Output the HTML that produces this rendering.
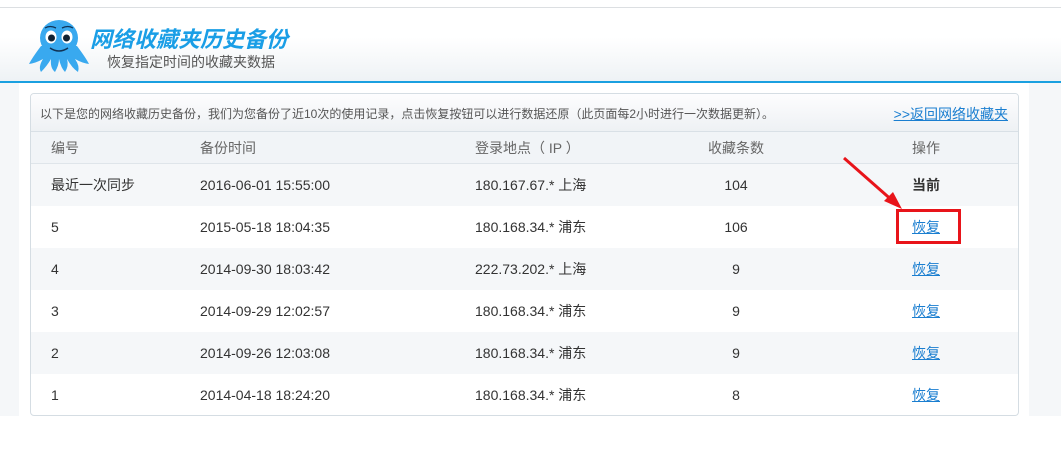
<!DOCTYPE html>
<html><head><meta charset="utf-8"><style>
*{margin:0;padding:0;box-sizing:border-box}
body{width:1061px;height:453px;background:#fff;font-family:"Liberation Sans","Noto Sans CJK SC",sans-serif;position:relative;overflow:hidden}
.topline{position:absolute;left:0;top:7px;width:1061px;height:1px;background:#dcdfe2}
.header{position:absolute;left:0;top:8px;width:1061px;height:73px;background:linear-gradient(#fff,#fff 40%,#eef2f5)}
.blue{position:absolute;left:0;top:81px;width:1061px;height:2px;background:#1aa0e0}
.side{position:absolute;top:83px;height:333px;background:#f5f7f9}
.panel{position:absolute;left:19px;top:83px;width:1010px;height:333px;background:#fff}
.card{position:absolute;left:30px;top:93px;width:989px;height:323px;border:1px solid #d5dde3;border-radius:4px;overflow:hidden;background:#fff}
.intro{height:38px;background:linear-gradient(#fdfdfe,#eef1f4);border-bottom:1px solid #d9e0e6;font-size:12px;color:#555;line-height:40px;padding-left:9px;position:relative}
.intro a{position:absolute;right:10px;top:0;color:#1a7ed0;font-size:14px;text-decoration:underline}
.row{height:42px;position:relative;font-size:14px;color:#333}
.row span{position:absolute;top:0;line-height:42px}
.hd{height:32px;background:#f1f4f7;border-bottom:1px solid #dfe5ea;color:#666}
.hd span{line-height:32px}
.g{background:#f5f7f9}
.c1{left:20px}.c2{left:169px}.c3{left:444px}.c4{left:680px;width:50px;text-align:center}.c5{left:875px;width:40px;text-align:center}
.lk{color:#1a7ed0;text-decoration:underline}
.title{position:absolute;left:90px;top:22px;font-size:22px;font-weight:bold;font-style:italic;color:#1a9ee6}
.sub{position:absolute;left:107px;top:52px;font-size:14px;color:#555}
</style></head><body>
<div class="topline"></div>
<div class="header"></div>
<svg style="position:absolute;left:28px;top:18px" width="62" height="56" viewBox="0 0 62 56">
<g fill="#39a9ef">
<ellipse cx="31" cy="20" rx="19" ry="18"/>
<path d="M13 28 Q4 40 1 46 Q8 45 15 41 Q10 49 13 54 Q19 48 23 41 Q22 50 27 54 Q31 47 31 41 Q33 50 37 54 Q41 48 39 41 Q44 50 50 54 Q52 48 47 41 Q54 45 61 46 Q58 40 49 28 Z"/>
</g>
<ellipse cx="23" cy="19" rx="5.5" ry="6.5" fill="#fff"/><ellipse cx="39" cy="19" rx="5.5" ry="6.5" fill="#fff"/>
<circle cx="23.5" cy="20" r="3.5" fill="#123"/><circle cx="38.5" cy="20" r="3.5" fill="#123"/>
<path d="M22 30 Q31 36 40 30" stroke="#135" stroke-width="1.5" fill="none"/>
<path d="M17 10 Q22 7 28 10 M34 10 Q40 7 45 10" stroke="#135" stroke-width="1.3" fill="none"/>
</svg>
<div class="title">网络收藏夹历史备份</div>
<div class="sub">恢复指定时间的收藏夹数据</div>
<div class="blue"></div>
<div class="side" style="left:0;width:19px"></div>
<div class="side" style="left:1029px;width:32px"></div>
<div class="panel"></div>
<div class="card">
<div class="intro">以下是您的网络收藏历史备份，我们为您备份了近10次的使用记录，点击恢复按钮可以进行数据还原（此页面每2小时进行一次数据更新）。<a>&gt;&gt;返回网络收藏夹</a></div>
<div class="row hd"><span class="c1">编号</span><span class="c2">备份时间</span><span class="c3">登录地点（ IP ）</span><span class="c4" style="left:670px;width:70px">收藏条数</span><span class="c5">操作</span></div>
<div class="row g"><span class="c1">最近一次同步</span><span class="c2">2016-06-01 15:55:00</span><span class="c3">180.167.67.* 上海</span><span class="c4">104</span><span class="c5" style="font-weight:bold">当前</span></div>
<div class="row"><span class="c1">5</span><span class="c2">2015-05-18 18:04:35</span><span class="c3">180.168.34.* 浦东</span><span class="c4">106</span><span class="c5 lk">恢复</span>
<div style="position:absolute;left:865px;top:3px;width:65px;height:35px;border:3px solid #e8141a"></div></div>
<div class="row g"><span class="c1">4</span><span class="c2">2014-09-30 18:03:42</span><span class="c3">222.73.202.* 上海</span><span class="c4">9</span><span class="c5 lk">恢复</span></div>
<div class="row"><span class="c1">3</span><span class="c2">2014-09-29 12:02:57</span><span class="c3">180.168.34.* 浦东</span><span class="c4">9</span><span class="c5 lk">恢复</span></div>
<div class="row g"><span class="c1">2</span><span class="c2">2014-09-26 12:03:08</span><span class="c3">180.168.34.* 浦东</span><span class="c4">9</span><span class="c5 lk">恢复</span></div>
<div class="row"><span class="c1">1</span><span class="c2">2014-04-18 18:24:20</span><span class="c3">180.168.34.* 浦东</span><span class="c4">8</span><span class="c5 lk">恢复</span></div>
</div>
<svg style="position:absolute;left:840px;top:154px" width="70" height="60"><line x1="4" y1="4" x2="54" y2="48" stroke="#e8141a" stroke-width="3"/><polygon points="62,55 44,47 53,38" fill="#e8141a"/></svg>
</body></html>
